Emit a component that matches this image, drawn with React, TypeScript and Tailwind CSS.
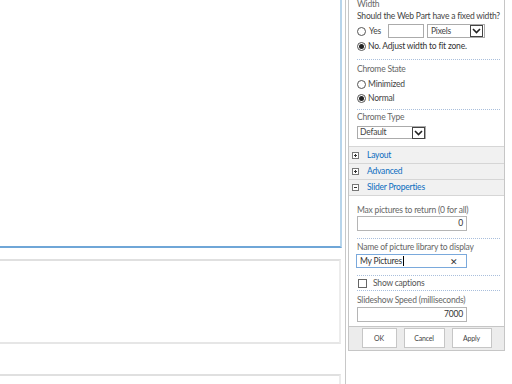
import React from "react";

const font = { fontFamily: 'Lato, "Noto Sans", sans-serif' };

function Radio({ checked }: { checked?: boolean }) {
  return (
    <span className="inline-flex w-[9px] h-[9px] rounded-full border border-[#555] items-center justify-center bg-white shrink-0">
      {checked && <span className="w-[5px] h-[5px] rounded-full bg-[#222]" />}
    </span>
  );
}

function Arrow() {
  return (
    <span className="w-[13px] h-[12px] border border-[#444] bg-white flex items-center justify-center shrink-0">
      <svg width="9" height="6" viewBox="0 0 9 6">
        <path d="M1 1 L4.5 4.5 L8 1" stroke="#222" strokeWidth="1.6" fill="none" />
      </svg>
    </span>
  );
}

function Dots() {
  return <div className="h-0 border-t border-dotted border-[#a9bfdc]" />;
}

function Expander({ label, minus, tall }: { label: string; minus?: boolean; tall?: boolean }) {
  return (
    <div className={`${tall ? "h-[17px]" : "h-[16px]"} shrink-0 bg-[#f1f1f1] border-b border-[#d6d6d6] flex items-center pl-[3px] gap-[8px]`}>
      <span className="w-[7px] h-[7px] border border-[#777] bg-white flex items-center justify-center relative">
        <span className="absolute w-[3px] h-px bg-[#333]" />
        {!minus && <span className="absolute w-px h-[3px] bg-[#333]" />}
      </span>
      <span className="text-[#0a6cbf]">{label}</span>
    </div>
  );
}

export default function App() {
  return (
    <div className="w-[512px] h-[384px] overflow-hidden bg-white flex" style={font}>
      {/* left zone */}
      <div className="w-[345px] shrink-0 flex flex-col">
        <div className="w-[342px] h-[248px] shrink-0 border-r-2 border-r-[#b8d5eb] border-b-2 border-b-[#6fa6d7]" />
        <div className="w-[341px] h-[85px] shrink-0 mt-[11px] border-t-2 border-t-[#e0e0e0] border-b-2 border-b-[#e6e6e6] border-r-2 border-r-[#ececec]" />
        <div className="w-[341px] h-[20px] shrink-0 mt-[30px] border-t-2 border-t-[#e0e0e0] border-r-2 border-r-[#ececec]" />
      </div>
      <div className="w-px h-full bg-[#c8c8c8] shrink-0" />
      <div className="w-[2px] shrink-0" />
      {/* tool pane */}
      <div className="w-[157px] h-[351px] shrink-0 border-l border-r border-b border-[#c6c6c6] flex flex-col text-[#555] text-[8.5px] tracking-[-0.2px] leading-[11px]">
        <div className="pl-[8px] pr-[4px] shrink-0">
          <div className="-mt-[1px] text-[#666]">Width</div>
          <div className="mt-[1px] text-[#444] whitespace-nowrap">Should the Web Part have a fixed width?</div>
          <div className="mt-[2px] flex items-center h-[14px]">
            <Radio />
            <span className="ml-[3px] text-[#444]">Yes</span>
            <span className="ml-[7px] w-[36px] h-[14px] border border-[#ababab] bg-white" />
            <span className="ml-[3px] w-[58px] h-[14px] border border-[#ababab] bg-white flex items-center justify-between pl-[3px] pr-px">
              <span className="text-[#444]">Pixels</span>
              <Arrow />
            </span>
          </div>
          <div className="mt-[3px] flex items-center">
            <Radio checked />
            <span className="ml-[2px] text-[#333]">No. Adjust width to fit zone.</span>
          </div>
          <div className="mt-[7px]"><Dots /></div>
          <div className="mt-[4px] text-[#666]">Chrome State</div>
          <div className="mt-[4px] flex items-center">
            <Radio />
            <span className="ml-[2px] text-[#444]">Minimized</span>
          </div>
          <div className="mt-[3px] flex items-center">
            <Radio checked />
            <span className="ml-[2px] text-[#444]">Normal</span>
          </div>
          <div className="mt-[5px]"><Dots /></div>
          <div className="mt-[2px] text-[#666]">Chrome Type</div>
          <div className="mt-[3px] w-[69px] h-[13px] border border-[#ababab] bg-white flex items-center justify-between pl-[2px]">
            <span className="text-[#444]">Default</span>
            <Arrow />
          </div>
        </div>
        <div className="mt-[7px] border-t border-[#d6d6d6] shrink-0">
          <Expander label="Layout" tall />
          <Expander label="Advanced" />
          <Expander label="Slider Properties" minus />
        </div>
        <div className="pl-[8px] pr-[4px] shrink-0">
          <div className="mt-[9px] text-[#666] whitespace-nowrap">Max pictures to return (0 for all)</div>
          <div className="mt-0 w-[110px] h-[15px] border border-[#b5b5b5] bg-white flex items-center justify-end pr-[3px] text-[#333]">0</div>
          <div className="mt-[7px]"><Dots /></div>
          <div className="mt-[3px] text-[#666] whitespace-nowrap">Name of picture library to display</div>
          <div className="mt-[1px] w-[111px] -ml-px h-[14px] border border-[#7aa9dc] bg-white flex items-center justify-between pl-[3px] pr-[8px] text-[#333]">
            <span>My Pictures<span className="inline-block w-px h-[10px] bg-[#000] align-middle ml-px" /></span>
            <span className="text-[9px] text-[#333]">✕</span>
          </div>
          <div className="mt-[7px]"><Dots /></div>
          <div className="mt-[2px] flex items-center h-[10px]">
            <span className="w-[9px] h-[9px] border border-[#666] bg-white ml-px" />
            <span className="ml-[6px] text-[#555]">Show captions</span>
          </div>
          <div className="mt-[2px]"><Dots /></div>
          <div className="mt-[4px] text-[#666] whitespace-nowrap">Slideshow Speed (milliseconds)</div>
          <div className="mt-[1px] w-[110px] h-[15px] border border-[#b5b5b5] bg-white flex items-center justify-end pr-[3px] text-[#333]">7000</div>
        </div>
        <div className="mt-[4px] flex-1 bg-[#ececec] border-t border-[#c6c6c6] flex items-center justify-center gap-[7px] pb-px">
          <button className="w-[35px] h-[20px] bg-white border border-[#c6c6c6] text-[7px] text-[#444]">OK</button>
          <button className="w-[41px] h-[20px] bg-white border border-[#c6c6c6] text-[7px] text-[#444]">Cancel</button>
          <button className="w-[40px] h-[20px] bg-white border border-[#c6c6c6] text-[7px] text-[#444]">Apply</button>
        </div>
      </div>
    </div>
  );
}
